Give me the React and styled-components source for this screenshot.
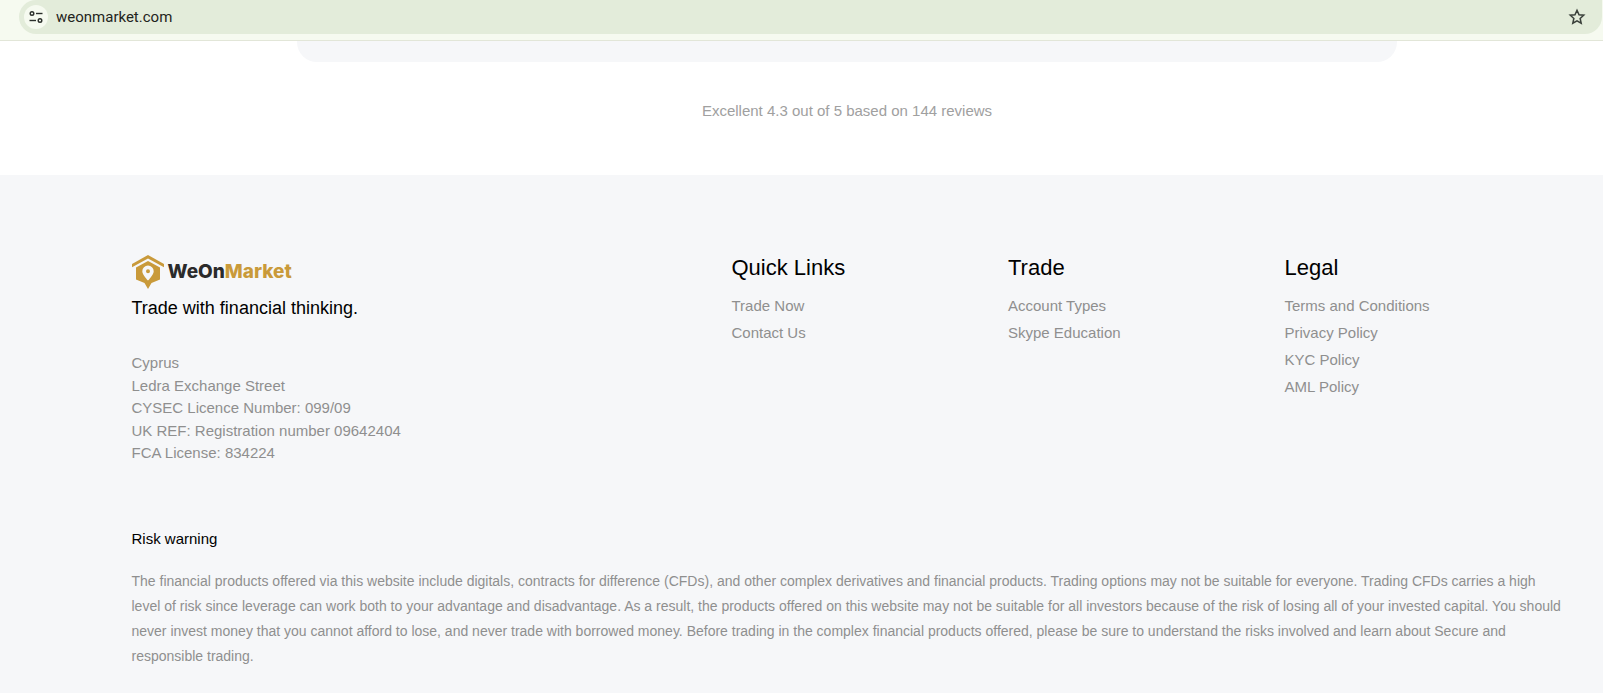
import React from 'react';
import styled, { createGlobalStyle } from 'styled-components';

const quickLinks = ['Trade Now', 'Contact Us'];
const tradeLinks = ['Account Types', 'Skype Education'];
const legalLinks = ['Terms and Conditions', 'Privacy Policy', 'KYC Policy', 'AML Policy'];
const address = [
  'Cyprus',
  'Ledra Exchange Street',
  'CYSEC Licence Number: 099/09',
  'UK REF: Registration number 09642404',
  'FCA License: 834224',
];

function App() {
  return (
    <>
      <GlobalStyle />
      <Page>
        <BrowserBar>
          <UrlPill>
            <SiteButton>
              <svg width="16" height="16" viewBox="0 0 16 16" fill="none" stroke="#2b2f2b" strokeWidth="1.4">
                <circle cx="4" cy="4.5" r="1.8" />
                <path d="M8 4.5h6.5" />
                <circle cx="12" cy="11.5" r="1.8" />
                <path d="M1.5 11.5H8" />
              </svg>
            </SiteButton>
            <UrlText>weonmarket.com</UrlText>
            <StarIcon width="18" height="18" viewBox="0 0 24 24" fill="none" stroke="#3a403a" strokeWidth="2">
              <path d="M12 3l2.7 6 6.3.6-4.8 4.3 1.4 6.4L12 17l-5.6 3.3 1.4-6.4L3 9.6l6.3-.6z" />
            </StarIcon>
          </UrlPill>
        </BrowserBar>
        <ReviewSection>
          <ReviewCard />
          <ReviewLine>Excellent 4.3 out of 5 based on 144 reviews</ReviewLine>
        </ReviewSection>
        <Footer>
          <Columns>
            <Brand>
              <Logo>
                <svg width="32" height="34" viewBox="0 0 32 34">
                  <path d="M16 0L32 9v3.200L16 3.400 0 12.200V9z" fill="#c99a3a" />
                  <path fillRule="evenodd" d="M16 6L28 12.600v12L19.500 28 16 34l-3.500-6L4 24.600v-12zM16 10.500a5.700 5.700 0 0 0-5.700 5.700c0 3.800 5.700 9.300 5.700 9.300s5.700-5.500 5.700-9.300a5.700 5.700 0 0 0-5.700-5.700zM16 14.200a2 2 0 1 1 0 4 2 2 0 0 1 0-4z" fill="#c99a3a" />
                </svg>
                <LogoText>
                  WeOn<LogoAccent>Market</LogoAccent>
                </LogoText>
              </Logo>
              <Tagline>Trade with financial thinking.</Tagline>
              <Address>
                {address.map((line) => (
                  <div key={line}>{line}</div>
                ))}
              </Address>
            </Brand>
            <LinkColumn title="Quick Links" links={quickLinks} />
            <LinkColumn title="Trade" links={tradeLinks} />
            <LinkColumn title="Legal" links={legalLinks} />
          </Columns>
          <RiskTitle>Risk warning</RiskTitle>
          <RiskText>
            The financial products offered via this website include digitals, contracts for difference (CFDs), and other complex derivatives and financial products. Trading options may not be suitable for everyone. Trading CFDs carries a high level of risk since leverage can work both to your advantage and disadvantage. As a result, the products offered on this website may not be suitable for all investors because of the risk of losing all of your invested capital. You should never invest money that you cannot afford to lose, and never trade with borrowed money. Before trading in the complex financial products offered, please be sure to understand the risks involved and learn about Secure and responsible trading.
          </RiskText>
        </Footer>
      </Page>
    </>
  );
}

function LinkColumn({ title, links }) {
  return (
    <div>
      <ColumnTitle>{title}</ColumnTitle>
      {links.map((link) => (
        <LinkItem key={link}>{link}</LinkItem>
      ))}
    </div>
  );
}

export default App;

const GlobalStyle = createGlobalStyle`
  html, body {
    margin: 0;
    background: #fff;
    font-family: "Liberation Sans", Arial, sans-serif;
    overflow: hidden;
  }
`;

const Page = styled.div`
  width: 1603px;
  height: 693px;
  display: flex;
  flex-direction: column;
  overflow: hidden;
`;

const BrowserBar = styled.div`
  height: 40px;
  flex: none;
  background: #f6faf0;
  border-bottom: 1px solid #e2e6d8;
  padding: 0 0 0 19px;
`;

const UrlPill = styled.div`
  width: 1583px;
  height: 34px;
  background: #e3ecda;
  border-radius: 0 0 17px 17px;
  border-top-left-radius: 17px;
  display: flex;
  align-items: center;
  padding-left: 5px;
  padding-right: 16px;
  box-sizing: border-box;
`;

const SiteButton = styled.div`
  width: 24px;
  height: 24px;
  border-radius: 50%;
  background: #f6faf0;
  display: flex;
  align-items: center;
  justify-content: center;
`;

const UrlText = styled.span`
  margin-left: 8px;
  font-family: Roboto, "Noto Sans", sans-serif;
  font-size: 15px;
  color: #1f2420;
  flex: 1;
`;

const StarIcon = styled.svg`
  flex: none;
`;

const ReviewSection = styled.div`
  width: 1100px;
  margin-left: 297px;
  flex: none;
`;

const ReviewCard = styled.div`
  height: 21px;
  background: #f6f7f9;
  border-radius: 0 0 20px 20px;
`;

const ReviewLine = styled.div`
  height: 113px;
  padding-top: 41px;
  box-sizing: border-box;
  text-align: center;
  font-size: 15px;
  line-height: 16px;
  color: #a0a0a0;
`;

const Footer = styled.footer`
  flex: 1;
  background: #f6f7f9;
  padding: 79px 38px 0 131.5px;
`;

const Columns = styled.div`
  display: grid;
  grid-template-columns: 600px 276.5px 276.5px 1fr;
`;

const Brand = styled.div`
  display: flex;
  flex-direction: column;
`;

const Logo = styled.div`
  display: flex;
  align-items: center;
  height: 35px;
  gap: 4px;
`;

const LogoText = styled.span`
  font-family: Inter, sans-serif;
  font-weight: 800;
  font-size: 19px;
  color: #2b2b2b;
`;

const LogoAccent = styled.span`
  color: #c99a3a;
`;

const Tagline = styled.div`
  margin-top: 8px;
  font-size: 18px;
  line-height: 22px;
  color: #000;
`;

const Address = styled.div`
  margin-top: 33px;
  font-size: 15px;
  line-height: 22.5px;
  color: #8f8f8f;
`;

const ColumnTitle = styled.h4`
  margin: 0 0 11px;
  font-size: 22px;
  font-weight: 400;
  line-height: 27px;
  color: #000;
`;

const LinkItem = styled.div`
  font-size: 15px;
  line-height: 27px;
  color: #8f8f8f;
`;

const RiskTitle = styled.div`
  margin-top: 64px;
  font-size: 15px;
  line-height: 20px;
  color: #000;
`;

const RiskText = styled.p`
  margin: 20px 0 0;
  font-size: 14px;
  line-height: 25px;
  color: #8f8f8f;
`;
